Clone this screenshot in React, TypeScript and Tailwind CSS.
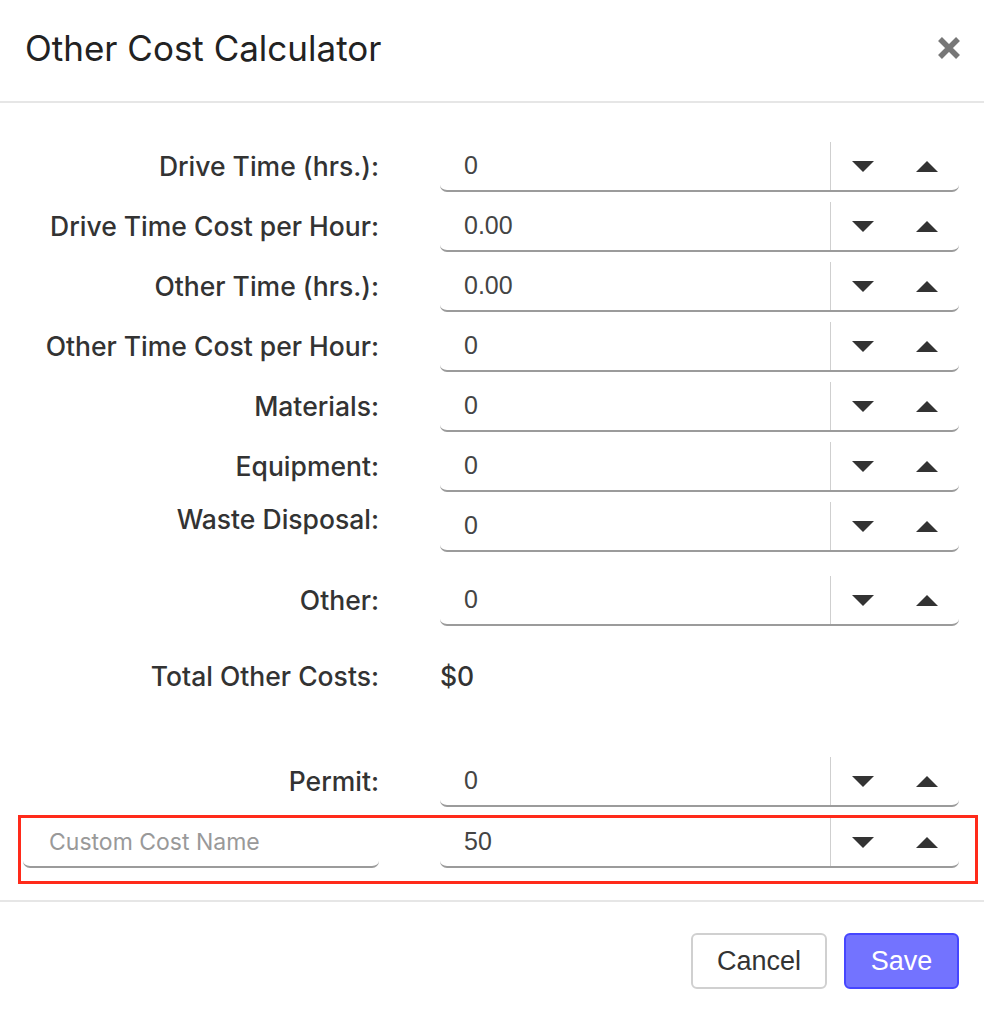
import React from "react";

const labelFont = { fontFamily: "Inter, 'Noto Sans', sans-serif" };

function Down() {
  return (
    <svg width="22" height="11" viewBox="0 0 22 11">
      <path d="M0 0 L22 0 L11 11 Z" fill="#333" />
    </svg>
  );
}
function Up() {
  return (
    <svg width="22" height="11" viewBox="0 0 22 11">
      <path d="M0 11 L22 11 L11 0 Z" fill="#333" />
    </svg>
  );
}

function NumberField({ value }: { value: string }) {
  return (
    <div className="flex h-[50px] items-stretch rounded-b-[7px] border-b-2 border-[#9b9b9b] bg-white">
      <div className="flex flex-1 items-center pl-[24px] text-[25px] text-[#444] font-['Liberation_Sans',Arial,sans-serif]">
        {value}
      </div>
      <div className="w-px bg-[#cfcfcf]" />
      <div className="flex w-[128px]">
        <button className="flex w-[64px] items-center justify-center">
          <Down />
        </button>
        <button className="flex w-[64px] items-center justify-center">
          <Up />
        </button>
      </div>
    </div>
  );
}

function Row({ label, value, extra }: { label: string; value: string; extra?: string }) {
  return (
    <div className={`grid grid-cols-[354px_519px] gap-x-[61px] ${extra ?? "mb-[10px]"}`}>
      <div className="flex items-center justify-end whitespace-nowrap text-[26.5px] font-medium text-[#333]" style={labelFont}>
        {label}
      </div>
      <NumberField value={value} />
    </div>
  );
}

export default function App() {
  return (
    <div className="h-[1020px] w-[984px] overflow-hidden bg-white" style={labelFont}>
      <div className="flex h-[103px] items-start justify-between border-b-2 border-[#e6e6e6] px-[25px] pt-[26px]">
        <h1 className="text-[35px] font-normal leading-[44px] text-[#222]">Other Cost Calculator</h1>
        <button className="mt-[10px] mr-[-2px] flex h-[24px] w-[24px] items-center justify-center">
          <svg width="24" height="24" viewBox="0 0 24 24">
            <path d="M3 3 L21 21 M21 3 L3 21" stroke="#777" strokeWidth="5.5" strokeLinecap="butt" />
          </svg>
        </button>
      </div>

      <div className="px-[25px] pt-[39px]">
        <Row label="Drive Time (hrs.):" value="0" />
        <Row label="Drive Time Cost per Hour:" value="0.00" />
        <Row label="Other Time (hrs.):" value="0.00" />
        <Row label="Other Time Cost per Hour:" value="0" />
        <Row label="Materials:" value="0" />
        <Row label="Equipment:" value="0" />
        <div className="mb-[24px] grid grid-cols-[354px_519px] gap-x-[61px]">
          <div className="flex items-start justify-end whitespace-nowrap pt-[2px] text-[26.5px] font-medium leading-[30px] text-[#333]">
            Waste Disposal:
          </div>
          <NumberField value="0" />
        </div>
        <Row label="Other:" value="0" extra="mb-[26px]" />
        <div className="mb-[55px] grid h-[50px] grid-cols-[354px_519px] gap-x-[61px]">
          <div className="flex items-center justify-end whitespace-nowrap text-[26.5px] font-medium text-[#333]">Total Other Costs:</div>
          <div className="flex items-center text-[26.5px] font-medium text-[#333]">$0</div>
        </div>
        <Row label="Permit:" value="0" extra="mb-[8px]" />
      </div>

      <div className="ml-[18px] mr-[6px] border-[3px] border-[#ff2a1a] pb-[13px] pl-[2px] pr-[16px]">
        <div className="grid grid-cols-[356px_519px] gap-x-[61px]">
          <div className="flex h-[50px] items-center rounded-b-[7px] border-b-2 border-[#9b9b9b] pl-[26px] text-[23px] text-[#999]">
            Custom Cost Name
          </div>
          <NumberField value="50" />
        </div>
      </div>

      <div className="mt-[16px] flex justify-end gap-[17px] border-t-2 border-[#e6e6e6] px-[25px] pt-[31px] font-['Liberation_Sans',Arial,sans-serif]">
        <button className="h-[56px] w-[136px] rounded-[6px] border-2 border-[#d0d0d0] bg-white text-[27px] text-[#333]">
          Cancel
        </button>
        <button className="h-[56px] w-[115px] rounded-[6px] border-2 border-[#4646ff] bg-[#7373ff] text-[27px] text-white">
          Save
        </button>
      </div>
    </div>
  );
}
